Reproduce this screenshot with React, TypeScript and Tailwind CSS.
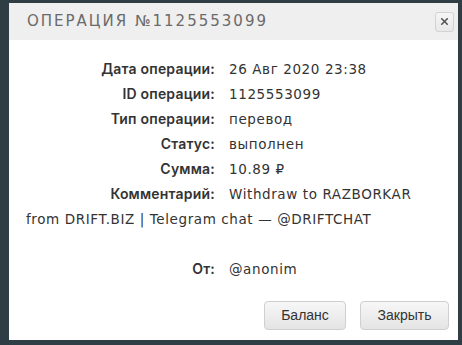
import { X } from "lucide-react";

const rows: [string, string][] = [
  ["Дата операции:", "26 Авг 2020 23:38"],
  ["ID операции:", "1125553099"],
  ["Тип операции:", "перевод"],
  ["Статус:", "выполнен"],
  ["Сумма:", "10.89 ₽"],
];

const Label = ({ children }: { children: string }) => (
  <span
    className="inline-block w-[203px] pr-[14px] text-right text-[14px] font-semibold tracking-[0.2px]"
    style={{ fontFamily: "Inter, sans-serif" }}
  >
    {children}
  </span>
);

export default function App() {
  return (
    <div className="h-[345px] w-[462px] bg-[#2f3e45] pl-[9px] pt-[3px]">
      <div className="flex h-[337px] w-[449px] flex-col bg-white">
        <div className="flex h-[37px] items-center justify-between bg-[#efefef] pl-[18px] pr-[4px]">
          <span
            className="text-[15px] uppercase tracking-[2px] text-[#6a6a6a]"
            style={{ fontFamily: '"DejaVu Sans", sans-serif' }}
          >
            Операция №1125553099
          </span>
          <button className="flex h-[20px] w-[19px] items-center justify-center rounded-[3px] border border-[#d3d3d3] bg-gradient-to-b from-[#f6f6f6] to-[#e8e8e8] text-[#555]">
            <X size={11} strokeWidth={3.5} />
          </button>
        </div>

        <div
          className="flex-1 pl-[17px] pr-[8px] pt-[16px] text-[13.5px] leading-[25px] tracking-[0.6px] text-[#333]"
          style={{ fontFamily: '"DejaVu Sans", sans-serif' }}
        >
          {rows.map(([label, value]) => (
            <div key={label} className="h-[25px]">
              <Label>{label}</Label>
              <span>{value}</span>
            </div>
          ))}
          <div className="h-[50px]">
            <Label>Комментарий:</Label>
            <span>
              Withdraw to RAZBORKAR
              <br />
              from DRIFT.BIZ | Telegram chat — @DRIFTCHAT
            </span>
          </div>
          <div className="h-[25px]" />
          <div className="h-[25px]">
            <Label>От:</Label>
            <span>@anonim</span>
          </div>
        </div>

        <div
          className="flex justify-end gap-[14px] pb-[10px] pr-[9px] text-[14px] text-[#333]"
          style={{ fontFamily: '"Liberation Sans", Arial, sans-serif' }}
        >
          <button className="h-[29px] w-[82px] rounded-[4px] border border-[#cfcfcf] bg-gradient-to-b from-[#f7f7f7] to-[#e4e4e4]">
            Баланс
          </button>
          <button className="h-[29px] w-[89px] rounded-[4px] border border-[#cfcfcf] bg-gradient-to-b from-[#f7f7f7] to-[#e4e4e4]">
            Закрыть
          </button>
        </div>
      </div>
    </div>
  );
}
